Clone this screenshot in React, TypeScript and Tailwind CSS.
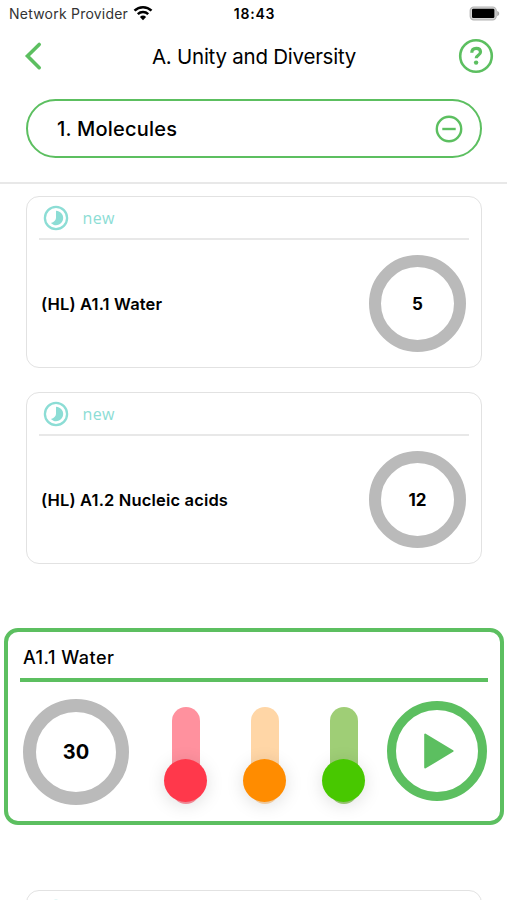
import { ReactNode } from 'react';
import clsx from 'clsx';

interface Topic {
  title: string;
  count: number;
}

interface Level {
  id: string;
  track: string;
  ball: string;
}

const topics: Topic[] = [
  { title: '(HL) A1.1 Water', count: 5 },
  { title: '(HL) A1.2 Nucleic acids', count: 12 },
];

const levels: Level[] = [
  { id: 'hard', track: 'bg-[#ff919e]', ball: 'bg-[#ff384b]' },
  { id: 'medium', track: 'bg-[#ffd6a6]', ball: 'bg-[#ff8c00]' },
  { id: 'easy', track: 'bg-[#9fce76]', ball: 'bg-[#48c800]' },
];

function WifiIcon() {
  return (
    <svg width="20" height="16" viewBox="0 0 20 16" className="mb-px ml-[5px]">
      <g fill="none" stroke="#000" strokeWidth="2.5">
        <path d="M1.5 5.7a12.2 12.2 0 0 1 17 0" />
        <path d="M4.8 9.2a7.5 7.5 0 0 1 10.4 0" />
      </g>
      <path d="M10 15.2 6.9 12a4.5 4.5 0 0 1 6.2 0z" />
    </svg>
  );
}

function BatteryIcon() {
  return (
    <svg width="32" height="16" viewBox="0 0 32 16">
      <rect x="2.2" y="1" width="26" height="12.8" rx="3.6" fill="#d6d6d6" stroke="#b4b4b4" strokeWidth="1.2" />
      <rect x="4" y="2.8" width="22.4" height="9.2" rx="1.2" />
      <path d="M29.2 5c1.7.6 2 1.6 2 2.6s-.3 2-2 2.6z" fill="#ababab" />
    </svg>
  );
}

function ProgressIcon() {
  return (
    <svg width="26" height="26" viewBox="0 0 26 26" className="shrink-0">
      <circle cx="13" cy="13" r="11.1" fill="none" stroke="#8cddd5" strokeWidth="2.3" />
      <path d="M13 5.8a7.2 7.2 0 1 1-5.1 12.3q4.7-1.6 5.1-5.1z" fill="#8cddd5" />
    </svg>
  );
}

function CountRing({ className, children }: { className: string; children: ReactNode }) {
  return (
    <div
      className={clsx(
        'flex shrink-0 items-center justify-center rounded-full border-[#bababa] font-bold',
        className
      )}
    >
      {children}
    </div>
  );
}

function CardHeader({ label }: { label?: string }) {
  return (
    <div className="mr-3 ml-3 flex h-[43px] items-center border-b-2 border-[#e8e8e8] pl-[3.5px]">
      <ProgressIcon />
      <span className="ml-[14px] font-['Open_Sans',sans-serif] text-[16px] tracking-[0.35px] text-[#8cddd5]">
        {label}
      </span>
    </div>
  );
}

function TopicCard({ topic }: { topic: Topic }) {
  return (
    <div className="h-[172px] rounded-[13px] border-[1.5px] border-[#e2e2e2]">
      <CardHeader label="new" />
      <div className="flex h-[127px] items-center justify-between pr-[15px] pl-[14px]">
        <span className="pt-px text-[16.5px] font-semibold tracking-[0.16px]">{topic.title}</span>
        <CountRing className="size-[97px] border-[12px] text-[17px]">
          <span className="pt-[2px]">{topic.count}</span>
        </CountRing>
      </div>
    </div>
  );
}

function Thermometer({ level }: { level: Level }) {
  return (
    <div className={clsx('relative h-[97px] w-7 rounded-full', level.track)}>
      <div
        className={clsx(
          'absolute bottom-[2px] -left-[7.5px] size-[43px] rounded-full shadow-[0_3px_18px_rgba(0,0,0,0.13)]',
          level.ball
        )}
      />
    </div>
  );
}

export default function App() {
  return (
    <div className="h-[900px] w-full overflow-hidden bg-white font-['Inter',sans-serif] text-black">
      <header className="h-[184px] border-b-2 border-[#e8e8e8]">
        <div className="grid h-[27px] grid-cols-3 items-center pr-[7px] pl-[9px] text-[14px]">
          <div className="flex items-center whitespace-nowrap text-[#333]">
            <span className="tracking-[0.22px]">Network Provider</span>
            <WifiIcon />
          </div>
          <div className="text-center font-semibold tracking-[0.8px]">18:43</div>
          <div className="flex justify-end">
            <BatteryIcon />
          </div>
        </div>
        <div className="flex h-[58px] items-center justify-between pr-[13px] pl-[23px]">
          <svg width="20" height="30" viewBox="0 0 20 30" fill="none" stroke="#5cbf60" strokeWidth="3.6" strokeLinecap="round">
            <path d="M16.2 3.5 4.5 15l11.7 11.7" />
          </svg>
          <h1 className="pt-[3px] pl-[7px] text-[20.5px] tracking-[-0.24px]">A. Unity and Diversity</h1>
          <svg width="36" height="36" viewBox="0 0 36 36" fill="none" stroke="#5cbf60">
            <circle cx="18" cy="18" r="15.8" strokeWidth="2.6" />
            <path d="M13.8 14.8c0-2.9 1.9-4.4 4.4-4.4 2.7 0 4.3 1.5 4.3 3.6 0 3.4-4.3 3.1-4.3 6.2" strokeWidth="3.2" />
            <circle cx="18.1" cy="24.6" r="2.2" fill="#5cbf60" stroke="none" />
          </svg>
        </div>
        <button className="mx-[26px] mt-[14px] flex h-[59px] w-[456px] items-center justify-between rounded-full border-2 border-[#5cbf60] pr-[17.5px] pl-[29px]">
          <span className="text-[20px] font-medium tracking-[0.2px]">1. Molecules</span>
          <svg width="28" height="28" viewBox="0 0 28 28" fill="none" stroke="#5cbf60" strokeWidth="2.4">
            <circle cx="14" cy="14" r="12.2" />
            <path d="M7.3 14h13.4" />
          </svg>
        </button>
      </header>

      <main className="pt-3">
        <div className="mr-[25px] ml-[26px] flex flex-col gap-6">
          {topics.map(topic => (
            <TopicCard key={topic.title} topic={topic} />
          ))}
        </div>

        <section className="mt-16 mr-[3px] ml-[4px] h-[197px] rounded-[14px] border-4 border-[#5cbf60]">
          <h2 className="mx-3 flex h-[50px] items-center border-b-4 border-[#5cbf60] pt-[5px] pl-[3px] text-[18px] font-medium tracking-[0.5px]">
            A1.1 Water
          </h2>
          <div className="flex h-[139px] items-center justify-between pr-[13px] pl-[15px]">
            <CountRing className="size-[106px] border-[13px] text-[20px]">30</CountRing>
            <div className="relative left-[6.5px] mt-[8px] flex gap-[51px]">
              {levels.map(level => (
                <Thermometer key={level.id} level={level} />
              ))}
            </div>
            <button className="mb-[2px] flex size-[100px] items-center justify-center rounded-full border-9 border-[#5cbf60]">
              <svg width="30" height="36" viewBox="0 0 30 36" fill="#5cbf60" stroke="#5cbf60" strokeWidth="2" strokeLinejoin="round" className="ml-[3px]">
                <path d="M1.2 1.5v33L28.6 18z" />
              </svg>
            </button>
          </div>
        </section>

        {/* top of the next card, cut by the screen edge */}
        <div className="mt-[65px] mr-[25px] ml-[26px] h-[172px] rounded-[13px] border-[1.5px] border-[#e2e2e2]">
          <CardHeader />
        </div>
      </main>
    </div>
  );
}
